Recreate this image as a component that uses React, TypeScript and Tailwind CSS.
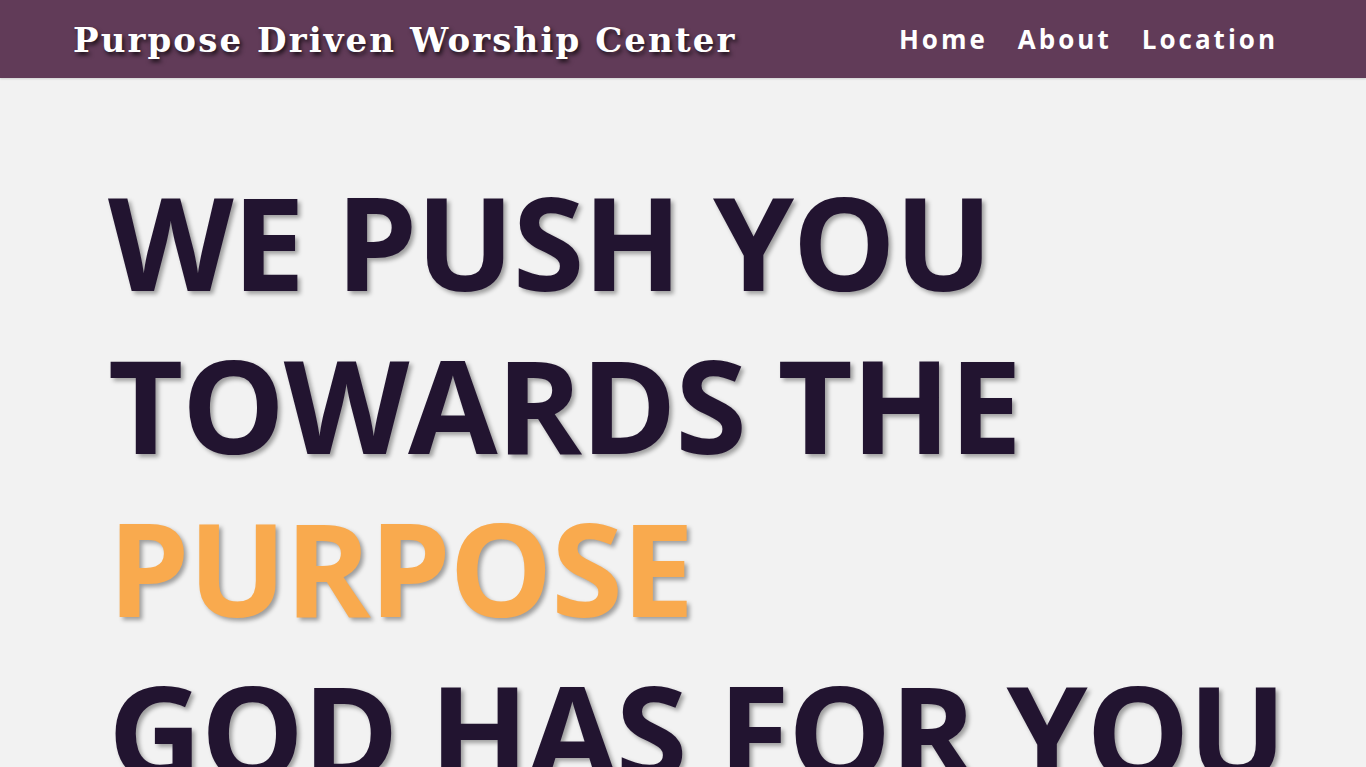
const navLinks = ['Home', 'About', 'Location'];

const lines = [
  { text: 'WE PUSH YOU', accent: false },
  { text: 'TOWARDS THE', accent: false },
  { text: 'PURPOSE', accent: true },
  { text: 'GOD HAS FOR YOU', accent: false },
];

export default function App() {
  return (
    <div className="min-h-screen bg-[#f2f2f2] overflow-hidden">
      <header className="h-[78px] bg-[#613b58] flex items-center justify-between pl-[73px] pr-[88px] shadow-[0_1px_2px_rgba(0,0,0,0.15)]">
        <h1 className="text-white font-bold text-[34px] tracking-[2.1px] font-['DejaVu_Serif',serif] [text-shadow:2px_3px_4px_rgba(0,0,0,0.7)] pt-[2px]">
          Purpose Driven Worship Center
        </h1>
        <nav className="flex items-center gap-[30px] font-['Open_Sans',sans-serif]">
          {navLinks.map((link) => (
            <a
              key={link}
              href="#"
              className="text-white font-bold text-[26px] tracking-[3px]"
            >
              {link}
            </a>
          ))}
        </nav>
      </header>

      <main className="pl-[108px] pt-[81px]">
        <h2 className="font-['Open_Sans',sans-serif] font-bold text-[130px] leading-[163px] tracking-[-1.5px] text-[#221430] [text-shadow:3px_3px_4px_rgba(0,0,0,0.35)]">
          {lines.map((line) => (
            <div
              key={line.text}
              className={`whitespace-nowrap ${line.accent ? 'text-[#f9aa4e]' : ''}`}
            >
              {line.text}
            </div>
          ))}
        </h2>
      </main>
    </div>
  );
}
